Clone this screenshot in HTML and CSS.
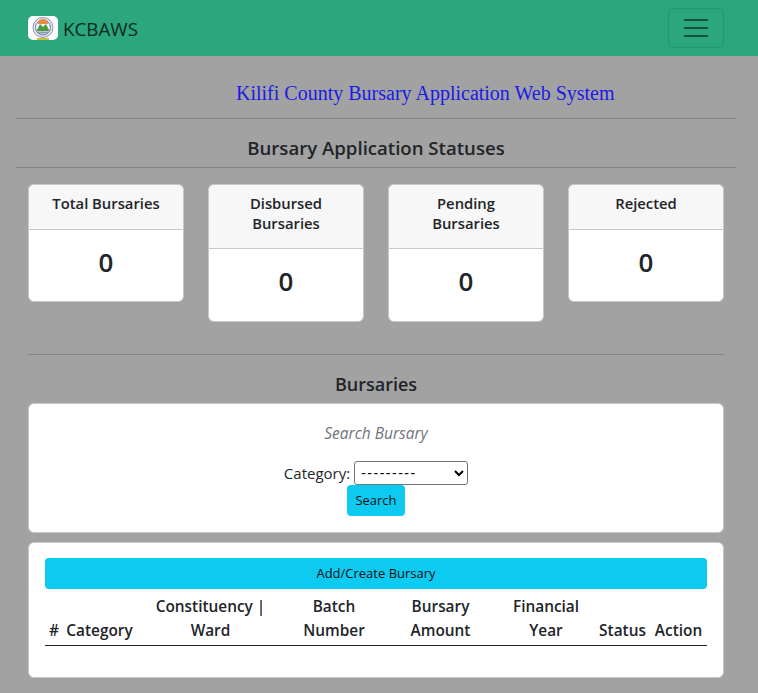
FILE: index.html
```html
<!DOCTYPE html>
<html lang="en">
<head>
<meta charset="utf-8">
<title>KCBAWS</title>
<link rel="stylesheet" href="styles.css">
</head>
<body>
<nav class="navbar">
  <a class="brand">
    <svg class="logo" width="30" height="24" viewBox="0 0 30 24">
      <rect width="30" height="24" rx="5" fill="#fff"/>
      <circle cx="15" cy="11.500" r="10" fill="#e4e7f0" stroke="#8d94b5" stroke-width="1"/>
      <circle cx="15" cy="11.500" r="7.500" fill="#f4f5f8" stroke="#6f78a0" stroke-width="1"/>
      <path d="M10 8a5 5 0 0 1 10 0z" fill="#e98a3c"/>
      <path d="M8.500 15l3.500-7 3 3 3-3 3.500 7z" fill="#4d9a3f"/>
      <path d="M10 15.500h10v2H10z" fill="#8d94b5"/>
      <path d="M9 22h12v2H9z" fill="#cdbd3a"/>
    </svg>
    <span class="brand-name">KCBAWS</span>
  </a>
  <button class="toggler" aria-label="Toggle navigation">
    <span class="bar"></span><span class="bar"></span><span class="bar"></span>
  </button>
</nav>
<main class="page">
  <h1 class="system-title">Kilifi County Bursary Application Web System</h1>
  <hr class="rule">
  <h2 class="section-title">Bursary Application Statuses</h2>
  <hr class="rule">
  <section class="inner stats">
    <div class="card stat"><div class="stat-head">Total Bursaries</div><div class="stat-body">0</div></div>
    <div class="card stat"><div class="stat-head">Disbursed Bursaries</div><div class="stat-body">0</div></div>
    <div class="card stat"><div class="stat-head">Pending Bursaries</div><div class="stat-body">0</div></div>
    <div class="card stat"><div class="stat-head">Rejected</div><div class="stat-body">0</div></div>
  </section>
  <section class="inner">
    <hr class="rule rule-inner">
    <h2 class="section-title sub">Bursaries</h2>
    <form class="card search">
      <p class="search-title">Search Bursary</p>
      <div class="search-row">
        <label class="search-label" for="category">Category:</label>
        <select id="category" class="select"><option>---------</option></select>
      </div>
      <button type="button" class="btn">Search</button>
    </form>
    <div class="card list">
      <button type="button" class="btn btn-wide">Add/Create Bursary</button>
      <table class="table">
        <thead>
          <tr>
            <th class="col-num">#</th>
            <th class="col-cat">Category</th>
            <th class="col-ward">Constituency | Ward</th>
            <th class="col-batch">Batch Number</th>
            <th class="col-amount">Bursary Amount</th>
            <th class="col-year">Financial Year</th>
            <th class="col-status">Status</th>
            <th class="col-action">Action</th>
          </tr>
        </thead>
      </table>
    </div>
  </section>
</main>
</body>
</html>
```
FILE: styles.css
```css
* { box-sizing: border-box; }
html, body { margin: 0; }
body {
  background: #a2a2a2;
  color: #212529;
  font-family: "Open Sans", "Noto Sans", sans-serif;
  font-size: 15px;
  line-height: 24px;
  height: 693px;
  overflow: hidden;
}
.navbar {
  height: 56px;
  background: #2ca77d;
  display: flex;
  align-items: center;
  justify-content: space-between;
  padding: 0 34px 0 28px;
}
.brand { display: flex; align-items: center; gap: 5px; font-size: 18.800px; color: #0b2a20; }
.brand-name { padding-top: 2px; }
.logo { display: block; }
.toggler {
  width: 56px;
  height: 40px;
  background: transparent;
  border: 1px solid #269670;
  border-radius: 6px;
  display: flex;
  flex-direction: column;
  align-items: center;
  justify-content: center;
  gap: 6px;
  padding: 0;
}
.bar { width: 24px; height: 2px; background: #14503c; }
.page { padding: 0 0 0 16px; width: 736px; }
.system-title {
  margin: 0;
  padding: 25px 0 0 220px;
  font: 400 20px/25px "Liberation Serif", serif;
  color: #1a1ae6;
  height: 62px;
}
.rule { margin: 0; border: 0; border-top: 1px solid #858585; }
.section-title { margin: 0; padding-top: 17px; height: 48px; text-align: center; font-size: 18.600px; line-height: 24px; font-weight: 600; }
.inner { margin: 0 12px; }
.stats {
  display: grid;
  grid-template-columns: repeat(4, 156px);
  column-gap: 24px;
  align-items: start;
  padding-top: 16px;
}
.card { background: #fff; border: 1px solid #c8c8c8; border-radius: 6px; }
.stat { overflow: hidden; }
.stat-head {
  background: #f7f7f7;
  border-bottom: 1px solid #c8c8c8;
  padding: 9px 16px 15px;
  text-align: center;
  font-weight: 550;
  line-height: 19.500px;
  font-size: 14.800px;
}
.stat-body { height: 71.500px; padding-top: 14px; text-align: center; font-size: 26px; line-height: 36px; font-weight: 550; }
.rule-inner { margin-top: 32px; }
.sub { font-size: 18px; }
.search { height: 130px; text-align: center; padding-top: 17px; }
.search-title { margin: 0 0 16px; font-style: italic; color: #6c757d; font-size: 15.500px; line-height: 24px; }
.search-row { display: flex; justify-content: center; align-items: center; gap: 4px; height: 24px; }
.search-label { font-size: 15px; }
.select {
  width: 114px;
  height: 24px;
  padding-left: 2px;
  font: 400 14px "Liberation Sans", sans-serif;
  letter-spacing: 1.500px;
  background: #fff;
  color: #000;
  border: 1px solid #767676;
  border-radius: 3px;
}
.btn {
  background: #0dcaf0;
  color: #111;
  border: 0;
  border-radius: 4px;
  font: inherit;
  font-size: 13px;
  height: 31px;
  padding: 0 8.500px;
  display: block;
  margin: 0 auto;
}
.list { margin-top: 9px; padding: 15px 16px 16px; height: 136px; }
.btn-wide { width: 100%; margin: 0; }
.table { width: 100%; border-collapse: collapse; table-layout: fixed; }
.table th {
  border-bottom: 1px solid #212529;
  padding: 6px 4px 2px;
  text-align: center;
  vertical-align: bottom;
  font-weight: 600;
  font-size: 15.400px;
}
.col-num { width: 17px; }
.col-cat { width: 75px; }
.col-ward { width: 147px; }
.col-batch { width: 100px; }
.col-amount { width: 113px; }
.col-year { width: 98px; }
.col-status { width: 55px; }
.col-action { width: 57px; }
```
